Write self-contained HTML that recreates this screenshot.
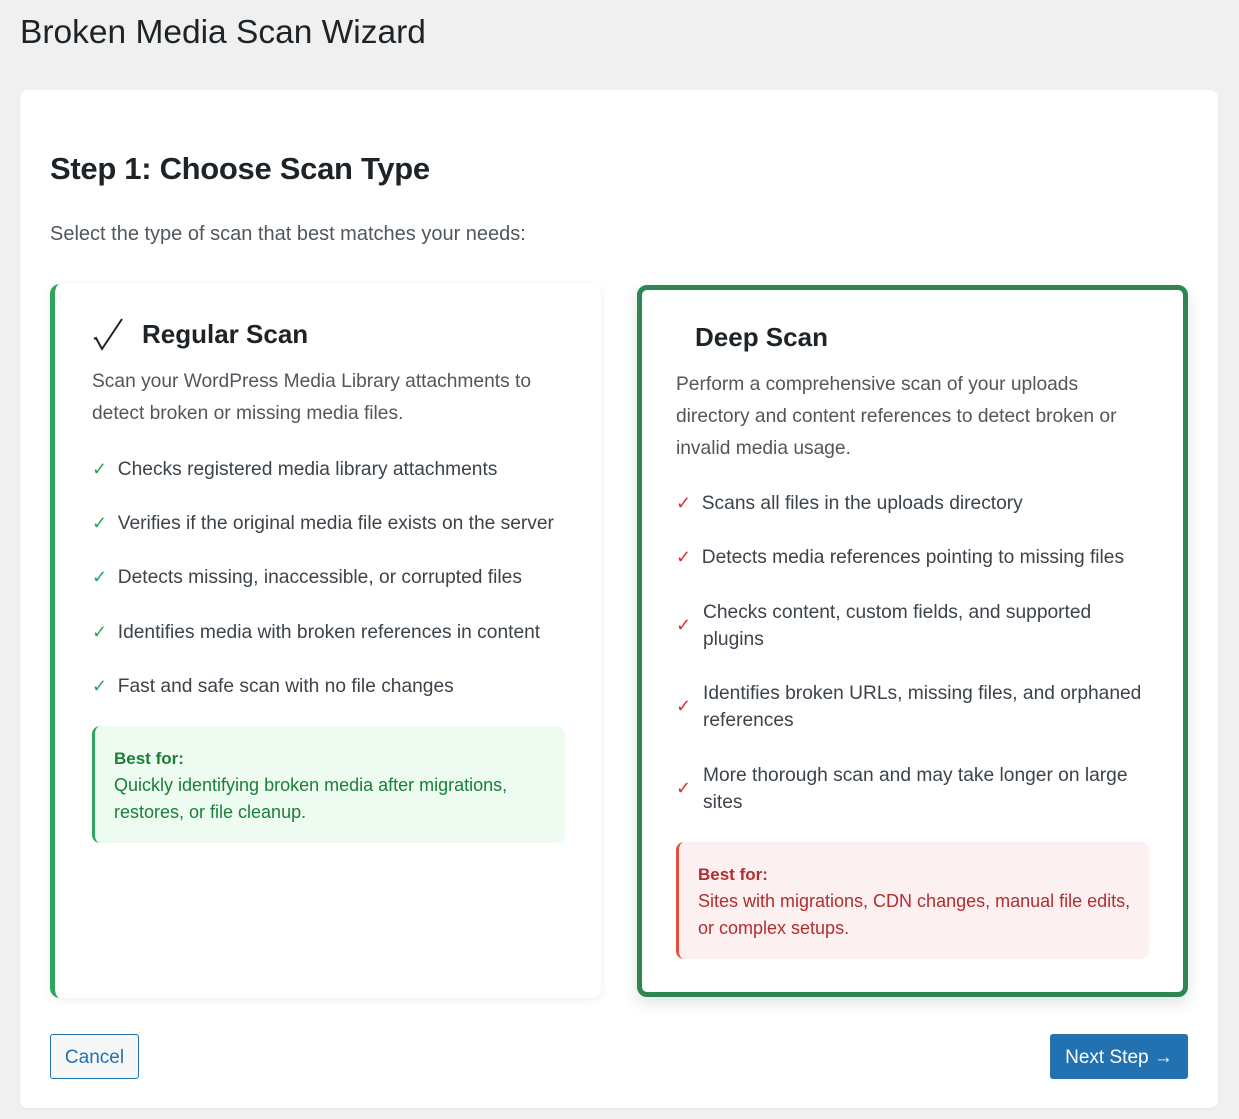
<!DOCTYPE html>
<html><head><meta charset="utf-8"><style>
*{margin:0;padding:0;box-sizing:border-box}
body{width:1239px;height:1119px;background:#f0f0f1;font-family:"Liberation Sans",sans-serif;color:#1d2327;position:relative;overflow:hidden}
.a{position:absolute;white-space:nowrap}
.panel{position:absolute;left:20px;top:90px;width:1198px;height:1018px;background:#fff;border-radius:8px;box-shadow:0 1px 2px rgba(0,0,0,.05)}
.card{position:absolute;background:#fff;border-radius:10px}
.l{left:50px;top:284px;width:551px;height:714px;border-left:5px solid #2ea55f;box-shadow:0 2px 10px rgba(0,0,0,.07)}
.r{left:637px;top:285px;width:551px;height:712px;border:5px solid #2e8555;box-shadow:0 6px 16px rgba(0,0,0,.12)}
.t{font-size:26px;font-weight:bold;color:#1d2327}
.d{font-size:19.2px;color:#50575e;line-height:32px}
.li{font-size:19.2px;color:#3c434a;line-height:27px}
.ck{font-size:18px}
.box{position:absolute;border-radius:8px;padding:19px 0 0 19px;font-size:18px;line-height:27px}
</style></head><body>
<div class="a" style="left:20px;top:14px;font-size:33.5px;color:#1d2327">Broken Media Scan Wizard</div>
<div class="panel"></div>
<div class="a" style="left:50px;top:151px;font-size:31px;font-weight:bold;color:#1d2327;letter-spacing:-0.3px">Step 1: Choose Scan Type</div>
<div class="a" style="left:50px;top:223px;font-size:20px;color:#50575e">Select the type of scan that best matches your needs:</div>
<div class="card l"></div>
<div class="card r"></div>

<svg class="a" style="left:92px;top:318px" width="32" height="34" viewBox="0 0 32 34"><polyline points="2,21 4,20 10,31 30,1" fill="none" stroke="#1d2327" stroke-width="2" stroke-linejoin="miter"/></svg>
<div class="a t" style="left:142px;top:319px">Regular Scan</div>
<div class="a d" style="left:92px;top:366px">Scan your WordPress Media Library attachments to<br>detect broken or missing media files.</div>
<div class="a li" style="left:92px;top:456px"><span class="ck" style="color:#2ea55f">✓</span>&nbsp; Checks registered media library attachments</div>
<div class="a li" style="left:92px;top:510px"><span class="ck" style="color:#2ea55f">✓</span>&nbsp; Verifies if the original media file exists on the server</div>
<div class="a li" style="left:92px;top:564px"><span class="ck" style="color:#2ea55f">✓</span>&nbsp; Detects missing, inaccessible, or corrupted files</div>
<div class="a li" style="left:92px;top:619px"><span class="ck" style="color:#2ea55f">✓</span>&nbsp; Identifies media with broken references in content</div>
<div class="a li" style="left:92px;top:673px"><span class="ck" style="color:#2ea55f">✓</span>&nbsp; Fast and safe scan with no file changes</div>
<div class="box" style="left:92px;top:726px;width:473px;height:117px;background:#edfbf1;border-left:3px solid #2ea55f;color:#1a7f37"><b style="font-weight:bold;font-size:17px">Best for:</b><br>Quickly identifying broken media after migrations,<br>restores, or file cleanup.</div>

<div class="a t" style="left:695px;top:322px">Deep Scan</div>
<div class="a d" style="left:676px;top:369px">Perform a comprehensive scan of your uploads<br>directory and content references to detect broken or<br>invalid media usage.</div>
<div class="a li" style="left:676px;top:490px"><span class="ck" style="color:#d63638">✓</span>&nbsp; Scans all files in the uploads directory</div>
<div class="a li" style="left:676px;top:544px"><span class="ck" style="color:#d63638">✓</span>&nbsp; Detects media references pointing to missing files</div>
<div class="a li" style="left:676px;top:612px;color:#d63638"><span class="ck">✓</span></div>
<div class="a li" style="left:703px;top:599px">Checks content, custom fields, and supported<br>plugins</div>
<div class="a li" style="left:676px;top:693px;color:#d63638"><span class="ck">✓</span></div>
<div class="a li" style="left:703px;top:680px">Identifies broken URLs, missing files, and orphaned<br>references</div>
<div class="a li" style="left:676px;top:775px;color:#d63638"><span class="ck">✓</span></div>
<div class="a li" style="left:703px;top:762px">More thorough scan and may take longer on large<br>sites</div>
<div class="box" style="left:676px;top:842px;width:473px;height:117px;background:#fdf0f0;border-left:3px solid #e04f3f;color:#b32d2e"><b style="font-size:17px">Best for:</b><br>Sites with migrations, CDN changes, manual file edits,<br>or complex setups.</div>

<div class="a" style="left:50px;top:1034px;width:89px;height:45px;border:1px solid #2271b1;border-radius:3px;background:#f6f7f7;color:#2271b1;font-size:19px;line-height:45px;text-align:center">Cancel</div>
<div class="a" style="left:1050px;top:1034px;width:138px;height:45px;border-radius:3px;background:#2271b1;color:#fff;font-size:19px;line-height:47px;text-align:center">Next Step →</div>
</body></html>
